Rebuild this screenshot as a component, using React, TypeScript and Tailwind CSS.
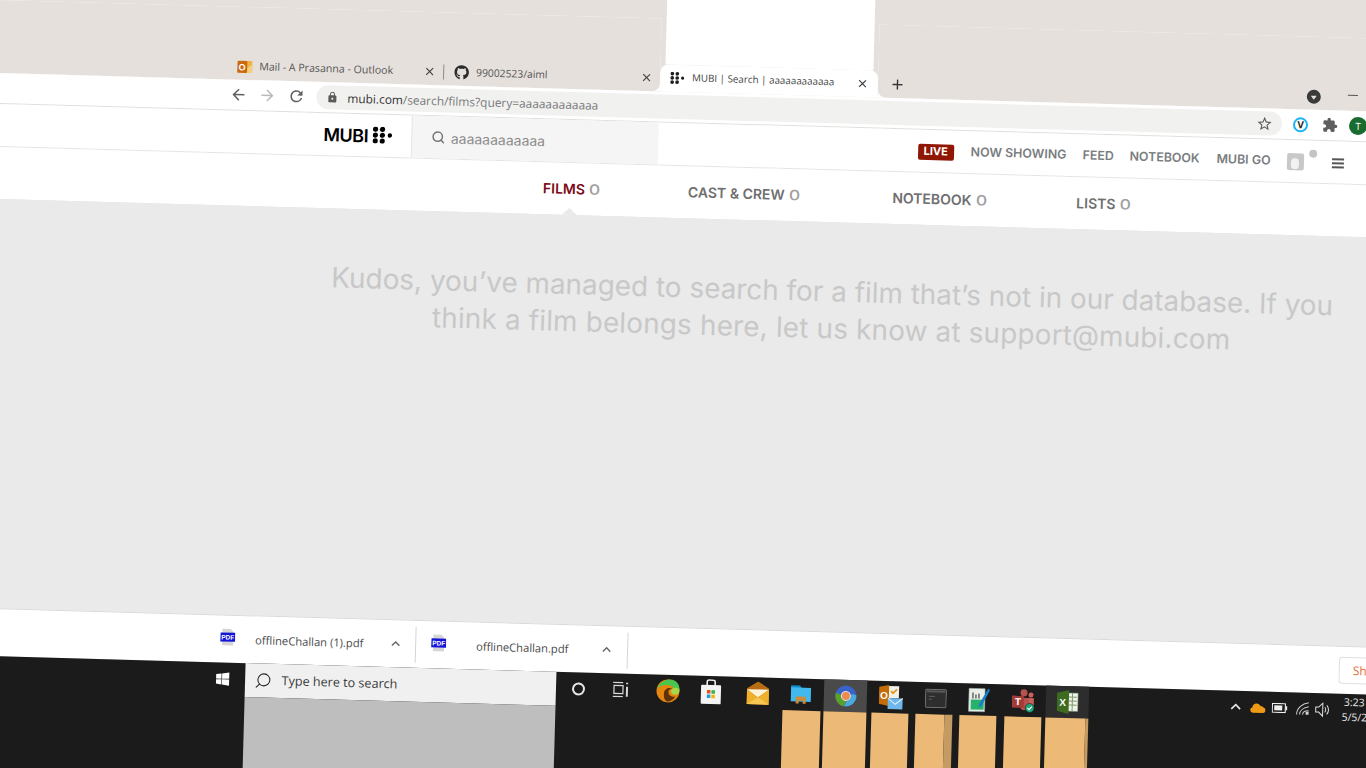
import { FaGithub, FaWindows } from "react-icons/fa";
import { MdAdd, MdArrowBack, MdArrowForward, MdClose, MdExpandLess, MdExtension, MdLock, MdRefresh, MdStarBorder } from "react-icons/md";
import { Search } from "lucide-react";
import type { ReactNode } from "react";

const uiFont = "font-['Open_Sans','Noto_Sans',sans-serif]";
const siteFont = "font-['Inter','Lato',sans-serif]";

const MubiDots = ({ size = 21, color = "#000" }: { size?: number; color?: string }) => (
  <svg width={size} height={size * 0.81} viewBox="0 0 21 17">
    {[[3, 2.6], [10, 2.6], [3, 8.5], [10, 8.5], [3, 14.4], [10, 14.4]].map(([cx, cy]) => (
      <circle key={`${cx}-${cy}`} cx={cx} cy={cy} r="2.6" fill={color} />
    ))}
    <circle cx="17.5" cy="8.5" r="2.2" fill={color} />
  </svg>
);

const OutlookSmall = () => (
  <svg width="16" height="14" viewBox="0 0 16 14">
    <rect x="5" y="1" width="10" height="12" fill="#eeb34b" />
    <path d="M5 5l5 3 5-3v8H5z" fill="#f6cf7e" />
    <rect x="0" y="1" width="10" height="12" rx="1" fill="#c96a10" />
    <text x="5" y="10.5" textAnchor="middle" fontSize="9" fontWeight="700" fill="#fff" fontFamily="Liberation Sans">O</text>
  </svg>
);

const PdfIcon = () => (
  <svg width="15" height="17" viewBox="0 0 15 17">
    <path d="M2 0h8l3 3v14H2z" fill="#d5d5d5" />
    <rect x="0" y="4" width="15" height="9" fill="#1414d8" />
    <text x="7.5" y="11" textAnchor="middle" fontSize="6.5" fontWeight="700" fill="#fff" fontFamily="Liberation Sans">PDF</text>
  </svg>
);

const TaskView = () => (
  <svg width="18" height="16" viewBox="0 0 18 16" fill="none" stroke="#d8d8d8" strokeWidth="1.2">
    <path d="M1 1h10M1 15h10" />
    <rect x="2" y="4" width="9" height="8" />
    <path d="M15 1v1.5M15 5v10" strokeWidth="2" />
  </svg>
);

const Edge = () => (
  <svg width="24" height="24" viewBox="0 0 24 24">
    <circle cx="12" cy="12" r="11.5" fill="#e5860f" />
    <path d="M1 11C3 3 10 .5 14 .5c6 0 10 5 9.500 11-.3 3-4 4-6 3 2-2 1-7-4-8C8 5.500 3 7 1 11z" fill="#4cc54f" />
    <path d="M23 10c1 3-.5 5-3 5.500s-5-1-5-3 4-6 8-2.500z" fill="#a6d94a" />
    <path d="M8 15c0-4 3-6 5.500-6 2 0 2.500 1 2.500 1-2-.5-3.500 1-3.500 3 0 3 3 5 7 4.500-2 3-5 5-8 5-3-1-3.500-4-3.500-7.500z" fill="#5c3208" />
  </svg>
);

const Store = () => (
  <svg width="22" height="26" viewBox="0 0 22 26">
    <path d="M7 7V3a2 2 0 012-2h4a2 2 0 012 2v4" fill="none" stroke="#eee" strokeWidth="1.6" />
    <rect x="1" y="6" width="20" height="19" rx="1" fill="#f4f4f4" />
    <rect x="7" y="11" width="3.500" height="3.500" fill="#e8501f" />
    <rect x="11.500" y="11" width="3.500" height="3.500" fill="#35b34a" />
    <rect x="7" y="15.500" width="3.500" height="3.500" fill="#1c9be6" />
    <rect x="11.500" y="15.500" width="3.500" height="3.500" fill="#f4b400" />
  </svg>
);

const MailApp = () => (
  <svg width="24" height="24" viewBox="0 0 24 24">
    <path d="M12 0l11 7v16H1V7z" fill="#b86d14" />
    <path d="M1 8h22l-11 8z" fill="#fff3d6" />
    <path d="M1 8l11 8 11-8v15H1z" fill="#efb02d" />
    <path d="M1 23l11-7 11 7z" fill="#f7c856" />
  </svg>
);

const Folder = () => (
  <svg width="22" height="20" viewBox="0 0 22 20">
    <path d="M1 1h9l2 3H1z" fill="#0f8fc9" />
    <rect x="1" y="3" width="20" height="14" fill="#42b9ee" />
    <path d="M6 19v-7h10v7h-3v-3H9v3z" fill="#cf8a36" />
  </svg>
);

const ChromeTask = () => (
  <svg width="22" height="24" viewBox="0 0 22 24">
    <circle cx="11" cy="12" r="10.500" fill="#3a63c9" />
    <path d="M1 9a10.500 10.500 0 008 13.500l4-8-6-3z" fill="#5ba028" />
    <path d="M21.500 11a10.500 10.500 0 01-12 11.300L13 15l4-5z" fill="#4ba9dc" />
    <circle cx="11" cy="12" r="5" fill="#dde6f2" />
    <circle cx="11" cy="12" r="4" fill="#ef8a4c" />
  </svg>
);

const OutlookTask = () => (
  <svg width="24" height="26" viewBox="0 0 24 26">
    <rect x="9" y="2" width="11" height="12" fill="#f3f0e8" />
    <path d="M12 7l2 2 4-4" stroke="#e09a26" strokeWidth="1.8" fill="none" />
    <path d="M0 3l10-2v21L0 20z" fill="#c46c08" />
    <text x="5" y="15" textAnchor="middle" fontSize="10" fontWeight="700" fill="#fff" fontFamily="Liberation Sans">O</text>
    <rect x="9" y="14" width="15" height="11" fill="#6fb6ea" />
    <path d="M9 14l7.500 6 7.500-6" stroke="#dff0fb" fill="none" />
  </svg>
);

const TerminalIcon = () => (
  <svg width="22" height="20" viewBox="0 0 22 20">
    <rect x=".7" y="1" width="20.600" height="18" rx="1" fill="#2e2e2e" stroke="#707070" />
    <rect x="2" y="2" width="18" height="2" fill="#595959" />
    <path d="M4 8h6M4 11h3" stroke="#5e5e5e" />
  </svg>
);

const SheetApp = () => (
  <svg width="22" height="26" viewBox="0 0 22 26">
    <rect x="1" y="2" width="16" height="23" fill="#e9eee8" stroke="#9aa" strokeWidth=".6" />
    <rect x="3" y="13" width="13" height="10" fill="#27b26b" />
    <path d="M5 6v6M8 8v4M11 7v5" stroke="#666" strokeWidth="1.5" />
    <path d="M20 2l2 1-8 16-3 2 .5-3.500z" fill="#1a7fc4" />
  </svg>
);

const Teams = () => (
  <svg width="24" height="24" viewBox="0 0 24 24">
    <circle cx="12" cy="4" r="3.500" fill="#b8524e" />
    <circle cx="19" cy="6" r="2.500" fill="#c9625c" />
    <path d="M14 9h8v8a5 5 0 01-8 3z" fill="#c9625c" />
    <path d="M9 9h8v9a5 5 0 01-8 2z" fill="#b8524e" />
    <rect x="0" y="7" width="12" height="12" fill="#a23b37" />
    <text x="6" y="16.500" textAnchor="middle" fontSize="10" fontWeight="700" fill="#fff" fontFamily="Liberation Sans">T</text>
    <circle cx="18" cy="19" r="4.500" fill="#1fa67a" stroke="#1b1b1b" strokeWidth=".6" />
    <path d="M15.800 19l1.600 1.600 2.800-3" stroke="#fff" strokeWidth="1.100" fill="none" />
  </svg>
);

const Excel = () => (
  <svg width="22" height="24" viewBox="0 0 22 24">
    <rect x="9" y="3" width="12" height="18" fill="#eef2ea" stroke="#a6b59a" strokeWidth=".6" />
    <path d="M12 7h8M12 11h8M12 15h8M15.500 3v18" stroke="#7a9a68" />
    <path d="M0 3l12-3v24L0 21z" fill="#3d6b1f" />
    <text x="6" y="16" textAnchor="middle" fontSize="10" fontWeight="700" fill="#fff" fontFamily="Liberation Sans">X</text>
  </svg>
);

const OneDrive = () => (
  <svg width="16" height="11" viewBox="0 0 16 11">
    <path d="M3 10.500a2.800 2.800 0 01-.3-5.500 4.200 4.200 0 018-1.500 3 3 0 013 1.500 2.800 2.800 0 01-.2 5.500z" fill="#ef9a14" />
  </svg>
);

const Battery = () => (
  <svg width="16" height="10" viewBox="0 0 16 10">
    <rect x=".6" y=".6" width="13" height="8.800" fill="none" stroke="#eee" strokeWidth="1.100" />
    <rect x="2.500" y="2.500" width="8" height="5" fill="#eee" />
    <rect x="14" y="3" width="1.500" height="4" fill="#eee" />
  </svg>
);

const Wifi = () => (
  <svg width="14" height="14" viewBox="0 0 14 14" fill="none" stroke="#cfcfcf" strokeWidth="1">
    <path d="M1 13C1 7 6 2 13 1M4 13c0-4 4-7 9-8M7 13c0-2 2-4 6-4" />
    <rect x="10" y="10" width="3" height="3" fill="#cfcfcf" stroke="none" />
  </svg>
);

const Speaker = () => (
  <svg width="16" height="15" viewBox="0 0 16 15" fill="none" stroke="#e0e0e0" strokeWidth="1">
    <path d="M1 5h3l4-4v13l-4-4H1z" />
    <path d="M10 5a3.500 3.500 0 010 5M12 3a6.500 6.500 0 010 9" />
  </svg>
);

const TabClose = () => <MdClose className="text-[#3c3c3c]" size={13} />;

const taskSlots: { width: number; active?: string; icon: ReactNode }[] = [
  { width: 24, icon: <span className="block size-[13px] rounded-full border-2 border-[#e6e6e6]" /> },
  { width: 62, icon: <TaskView /> },
  { width: 32, icon: <Edge /> },
  { width: 54, icon: <Store /> },
  { width: 39, icon: <MailApp /> },
  { width: 47, icon: <Folder /> },
  { width: 43, active: "bg-[#4a4a4a]", icon: <ChromeTask /> },
  { width: 48, icon: <OutlookTask /> },
  { width: 41, icon: <TerminalIcon /> },
  { width: 45, icon: <SheetApp /> },
  { width: 45, icon: <Teams /> },
  { width: 43, active: "bg-[#2d2d2d]", icon: <Excel /> },
];

const tanBars = [
  { left: 217, width: 38 },
  { left: 3, width: 43 },
  { left: 5, width: 37 },
  { left: 7, width: 29, shade: 8 },
  { left: 7, width: 37 },
  { left: 8, width: 37 },
  { left: 4, width: 40, shade: 3 },
];

const topLinks = [
  { label: "NOW SHOWING", width: "w-[112px]" },
  { label: "FEED", width: "w-[47px]" },
  { label: "NOTEBOOK", width: "w-[87px]" },
  { label: "MUBI GO", width: "w-[70px]" },
];

const resultTabs = [
  { label: "FILMS", width: "w-[145px]", active: true },
  { label: "CAST & CREW", width: "w-[204.500px]" },
  { label: "NOTEBOOK", width: "w-[184px]" },
  { label: "LISTS", width: "w-[100px]" },
];

const DownloadItem = ({ name, lead, textWidth, width, className = "" }: { name: string; lead: string; textWidth: string; width: string; className?: string }) => (
  <div className={`flex h-[36px] shrink-0 items-center border-r border-[#d5d5d5] ${width} ${className}`}>
    <div className={`-mt-[4px] flex shrink-0 ${lead}`}>
      <PdfIcon />
    </div>
    <span className={`${textWidth} text-[11.200px] leading-none text-[#4b4b4b]`}>{name}</span>
    <MdExpandLess className="text-[#666]" size={17} />
  </div>
);

export default function App() {
  return (
    <div className={`relative h-[768px] w-[1366px] overflow-hidden bg-[#e5e0dc] ${uiFont}`}>
      <div className="absolute left-0 top-0 flex w-[1440px] origin-top-left rotate-[1.6deg] flex-col">
        {/* TAB STRIP */}
        <div className="flex h-[73px] bg-white">
          <div className="flex w-[662px] items-end rounded-br-lg bg-[#e5e0dc] pl-[239px]">
            <div className="flex h-[27px] w-[206px] items-center pr-[6px]">
              <OutlookSmall />
              <span className="ml-[6px] w-[164px] text-[10.600px] text-[#555]">Mail - A Prasanna - Outlook</span>
              <TabClose />
            </div>
            <div className="mb-[6px] h-[15px] w-px self-end bg-[#8c8c8c]" />
            <div className="flex h-[27px] flex-1 items-center pl-[10px]">
              <FaGithub className="text-[#2b2b2b]" size={15} />
              <span className="ml-[7px] w-[164px] text-[10.300px] text-[#555]">99002523/aiml</span>
              <TabClose />
            </div>
          </div>
          <div className="-mt-[60px] flex h-[133px] w-[218px] flex-col bg-[#e5e0dc]">
            <div className="mx-[5px] flex-1 bg-white" />
            <div className="flex h-[27px] items-center rounded-t-lg bg-white pl-[10px]">
              <MubiDots size={15} color="#1e1e1e" />
              <span className="ml-[7px] w-[164px] text-[9.800px] text-[#444]">MUBI | Search | aaaaaaaaaaaa</span>
              <TabClose />
            </div>
          </div>
          <div className="flex flex-1 items-end rounded-bl-lg bg-[#e5e0dc] pl-[11px]">
            <div className="flex h-[27px] items-center">
              <MdAdd className="text-[#333]" size={17} />
              <span className="ml-[401px] flex size-[14px] items-center justify-center rounded-full bg-[#3a3a3a]">
                <span className="mt-[2px] border-x-[3.500px] border-t-[4px] border-x-transparent border-t-[#e5e0dc]" />
              </span>
              <span className="-mt-[4px] ml-[27px] h-px w-[10px] bg-[#555]" />
            </div>
          </div>
        </div>

        {/* TOOLBAR */}
        <div className="flex h-[31px] items-center border-b border-[#dedede] bg-white pl-[232px]">
          <MdArrowBack className="text-[#5f5f5f]" size={18} />
          <MdArrowForward className="ml-[11px] text-[#b9b9b9]" size={18} />
          <MdRefresh className="ml-[11px] text-[#5f5f5f]" size={18} />
          <div className="ml-[11px] flex h-[24px] w-[966px] items-center rounded-full bg-[#f1f1f0] pl-[10px] pr-[9px]">
            <MdLock className="text-[#5a5a5a]" size={12} />
            <span className="ml-[9px] mt-[1px] flex-1 text-[11.900px] text-[#7a7a7a]">
              <span className="text-[#333]">mubi.com</span>/search/films?query=aaaaaaaaaaaa
            </span>
            <MdStarBorder className="text-[#5f5f5f]" size={17} />
          </div>
          <span className="ml-[11px] flex size-[15px] items-center justify-center rounded-full border-2 border-[#1cb4f4] bg-white text-[10px] font-bold leading-none text-[#222]">V</span>
          <MdExtension className="ml-[14px] text-[#5f5f5f]" size={16} />
          <span className="ml-[11px] flex size-[18px] items-center justify-center rounded-full bg-[#1a6b2f] text-[10px] text-white">T</span>
        </div>

        {/* MUBI HEADER */}
        <div className={`flex h-[43px] items-stretch border-b border-[#e4e4e4] bg-white pl-[327px] ${siteFont}`}>
          <div className="flex w-[87.500px] shrink-0 items-center">
            <span className="mt-[2px] text-[18px] font-semibold leading-none tracking-[-0.5px] text-black">MUBI</span>
            <span className="-mt-[2px] ml-[4px]"><MubiDots /></span>
          </div>
          <div className="flex w-[247px] shrink-0 items-center border-l border-[#e6e6e6] bg-[#f5f5f5] pl-[19px]">
            <Search className="text-[#777]" size={14} strokeWidth={2.6} />
            <span className="ml-[6px] text-[14px] text-[#8a8a8a]">aaaaaaaaaaaa</span>
          </div>
          <div className="ml-[260px] mt-[1px] flex items-center">
            <span className="flex h-[16px] w-[36px] items-center justify-center rounded-[2px] bg-[#8f1703] text-[11px] font-bold text-white">LIVE</span>
            <div className="ml-[17px] flex items-center">
              {topLinks.map((l) => (
                <span key={l.label} className={`${l.width} text-[12.400px] font-semibold text-[#7a7d80]`}>{l.label}</span>
              ))}
            </div>
            <span className="relative flex size-[17px] items-end justify-center rounded-[2px] bg-[#c8c8c8]">
              <span className="mb-[1px] h-[11px] w-[8px] rounded-full bg-[#f2f2f2]" />
              <span className="absolute -right-[13px] -top-[4px] size-[8px] rounded-full bg-[#c4c4c4]" />
            </span>
            <span className="ml-[28px] flex w-[12px] flex-col gap-[2px]">
              <i className="h-[2px] bg-[#555]" />
              <i className="h-[2px] bg-[#555]" />
              <i className="h-[2px] bg-[#555]" />
            </span>
          </div>
        </div>

        {/* RESULT TABS */}
        <div className={`flex h-[52px] items-center bg-white pb-[2px] pl-[548px] ${siteFont}`}>
          {resultTabs.map((t) => (
            <div key={t.label} className={`${t.width} text-[14px] font-semibold`}>
              <span className={t.active ? "text-[#7c0a18]" : "text-[#6f6f6f]"}>{t.label}</span>
              <span className="ml-[4px] inline-block origin-left scale-x-125 font-medium text-[#a0a0a0]">0</span>
            </div>
          ))}
        </div>

        {/* EMPTY RESULT */}
        <div className={`relative h-[409px] bg-[#eaeaea] pl-[327px] pt-[51px] ${siteFont}`}>
          <div className="absolute -top-[7px] left-[567px] h-[7px] w-[16px] bg-[#eaeaea] [clip-path:polygon(50%_0,100%_100%,0_100%)]" />
          <p className="w-[1026px] whitespace-nowrap text-center text-[27.900px] leading-[37px] text-[#c8c8c8]">
            Kudos, you’ve managed to search for a film that’s not in our database. If you
            <br />
            <span className="tracking-[0.17px]">think a film belongs here, let us know at support@mubi.com</span>
          </p>
        </div>

        {/* DOWNLOAD BAR */}
        <div className="flex h-[48px] items-center border-t border-[#d9d9d9] bg-white pl-[238px]">
          <DownloadItem name="offlineChallan (1).pdf" lead="w-[35px]" textWidth="w-[131.500px]" width="w-[195.500px]" />
          <DownloadItem name="offlineChallan.pdf" lead="w-[45.500px]" textWidth="w-[121.500px]" width="w-[197.500px]" className="ml-[15px]" />
          <div className="ml-[711px] flex h-[27px] w-[80px] shrink-0 items-center rounded-[3px] border border-[#e0e0e0] pl-[13px] text-[12px] text-[#e8703a]">Show all</div>
        </div>

        {/* TASKBAR */}
        <div className="flex h-[150px] bg-[#1b1b1b]">
          <div className="flex h-[32px] w-[263.500px] shrink-0 items-center justify-end pr-[15px]">
            <FaWindows className="text-white" size={15} />
          </div>
          <div className="flex w-[311.500px] shrink-0 flex-col">
            <div className="flex h-[34px] items-center bg-[#f0f0f0] pl-[9px] text-[12.600px] text-[#3a3a3a]">
              <Search className="-scale-x-100 text-[#222]" size={18} strokeWidth={1.4} />
              <span className="ml-[10px]">Type here to search</span>
            </div>
            <div className="flex-1 bg-[#bebebe]" />
          </div>
          <div className="flex w-[533px] shrink-0 flex-col pl-[10px]">
            <div className="flex h-[32px]">
              {taskSlots.map((s, i) => (
                <div key={i} className={`flex shrink-0 items-center justify-center ${s.active ?? ""}`} style={{ width: s.width }}>
                  {s.icon}
                </div>
              ))}
            </div>
            <div className="flex flex-1">
              {tanBars.map((b, i) => (
                <div key={i} className="flex shrink-0" style={{ marginLeft: b.left }}>
                  <div className="bg-[#ecb976]" style={{ width: b.width }} />
                  {b.shade ? <div className="bg-[#c49c63]" style={{ width: b.shade }} /> : null}
                </div>
              ))}
            </div>
          </div>
          <div className="flex h-[32px] items-center pl-[137px]">
            <MdExpandLess className="text-[#e8e8e8]" size={20} />
            <span className="ml-[4px]"><OneDrive /></span>
            <span className="ml-[6px]"><Battery /></span>
            <span className="ml-[8px]"><Wifi /></span>
            <span className="ml-[5px]"><Speaker /></span>
            <div className="ml-[11px] flex flex-col items-start text-[10.500px] leading-[15px] text-[#e6e6e6]">
              <span className="ml-[2px]">3:23 PM</span>
              <span>5/5/2021</span>
            </div>
          </div>
        </div>
      </div>
    </div>
  );
}
